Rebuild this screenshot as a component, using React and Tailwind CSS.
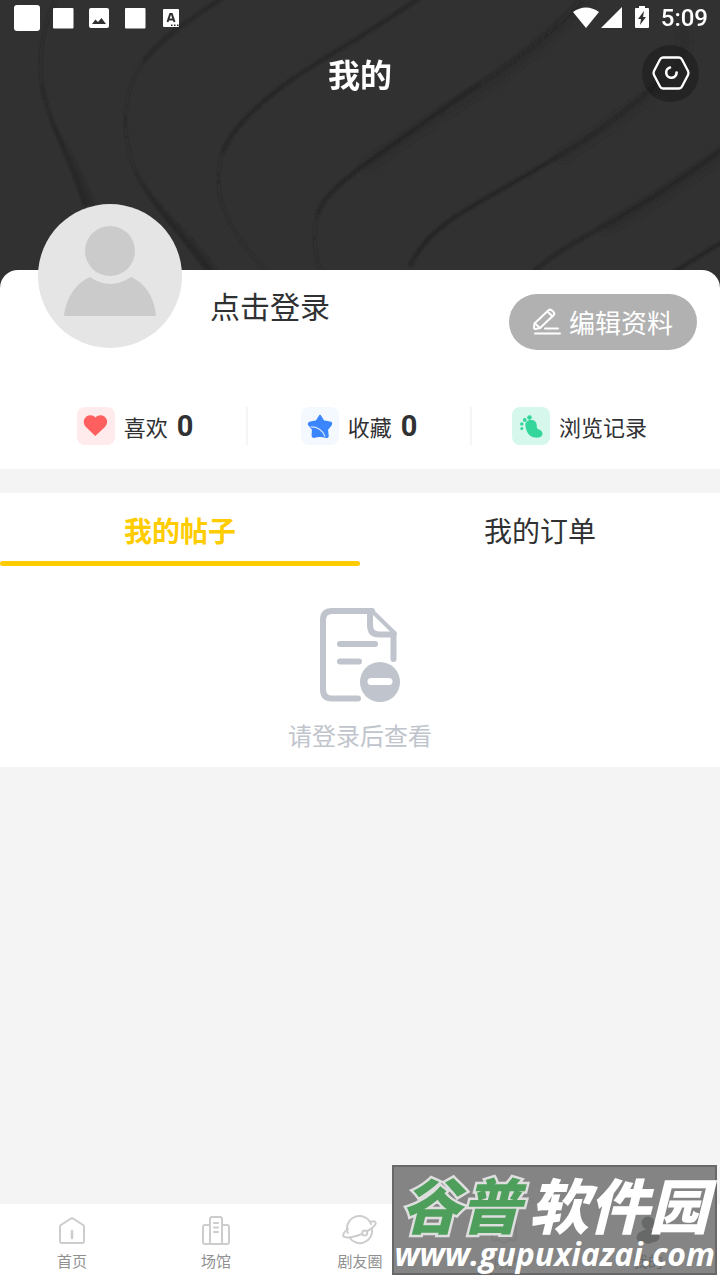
import { useState } from "react";

const navItems = [
  { key: "home", label: "首页", icon: HomeIcon },
  { key: "venue", label: "场馆", icon: VenueIcon },
  { key: "circle", label: "剧友圈", icon: PlanetIcon },
  { key: "message", label: "消息", icon: MessageIcon },
  { key: "mine", label: "我的", icon: MineIcon },
];

const tabs = [
  { key: "posts", label: "我的帖子" },
  { key: "orders", label: "我的订单" },
];

function HeaderWaves() {
  return (
    <svg
      className="absolute inset-0 h-full w-full"
      viewBox="0 0 720 288"
      preserveAspectRatio="xMidYMin slice"
      fill="none"
      aria-hidden="true"
    >
      <defs>
        <filter id="soft" x="-5%" y="-5%" width="110%" height="110%">
          <feGaussianBlur stdDeviation="0.8" />
        </filter>
        <filter id="softer" x="-5%" y="-5%" width="110%" height="110%">
          <feGaussianBlur stdDeviation="3" />
        </filter>
      </defs>
      <g stroke="#2b2b2b" strokeWidth="6" filter="url(#softer)">
        <path d="M590 0C555 34 520 62 484 88C440 114 400 142 364 168" />
        <path d="M682 25C690 50 680 66 664 82C620 119 600 132 560 158" />
        <path d="M724 152C684 182 644 207 604 230" />
      </g>
      <path d="M50 118C60 142 76 172 84 206L95 206C84 176 66 142 50 118Z" fill="#292929" filter="url(#soft)" />
      <path d="M142 182C160 215 190 245 206 272L219 272C196 240 165 215 142 182Z" fill="#292929" filter="url(#soft)" />
      <g stroke="#212121" strokeWidth="2" filter="url(#soft)">
        <path d="M56 0C38 35 36 75 48 112" opacity=".35" />
        <path d="M42 84C50 130 74 166 85 206" opacity=".6" />
        <path d="M143 62C120 96 122 138 135 170" opacity=".25" />
        <path d="M135 170C152 208 186 238 210 272" opacity=".55" />
        <path d="M222 -2C190 20 163 36 143 62" strokeWidth="3" opacity=".7" />
        <path d="M420 -2L360 37C335 52 300 72 275 92C240 120 228 138 222 154" strokeWidth="3" opacity=".75" />
        <path d="M222 154C208 200 236 240 268 272" opacity=".25" />
        <path d="M582 0C552 32 520 58 480 84" strokeWidth="3" opacity=".45" />
        <path d="M480 84C440 110 395 143 360 168C334 188 322 200 317 216" strokeWidth="3" opacity=".75" />
        <path d="M317 216C312 240 315 258 322 272" opacity=".25" />
        <path d="M660 80C625 113 595 134 560 155" strokeWidth="3" opacity=".4" />
        <path d="M560 155C520 180 488 196 455 217C432 233 420 245 410 266" strokeWidth="3" opacity=".8" />
        <path d="M722 149C682 179 640 206 600 228C575 243 552 254 534 272" strokeWidth="3" opacity=".7" />
        <path d="M722 242C706 252 690 262 674 272" strokeWidth="3" opacity=".8" />
      </g>
    </svg>
  );
}

function StatusBar() {
  return (
    <div className="relative flex h-9 items-center justify-between pl-3.5 pr-3 text-white">
      <svg className="h-7 w-[166px]" viewBox="0 0 166 28" fill="currentColor" aria-hidden="true">
        <rect x="0" y="1" width="26" height="26" rx="3" />
        <rect x="39" y="4" width="20.500" height="20.500" rx="1" />
        <path
          fillRule="evenodd"
          d="M77 4h16a2 2 0 0 1 2 2v16a2 2 0 0 1-2 2H77a2 2 0 0 1-2-2V6a2 2 0 0 1 2-2Zm1 16h14l-4.500-6-3.500 4-2.500-2.500Z"
        />
        <rect x="111" y="4" width="20.500" height="20.500" rx="1" />
        <rect x="149" y="5" width="16" height="18" rx="1" />
        <path
          d="M153.500 18l2.700-8h1.600l2.700 8M154.500 15.500h5"
          fill="none"
          stroke="#303030"
          strokeWidth="2"
        />
        <path d="M157 20.500h1.500v1.500h-1.500zM160 20.500h1.500v1.500h-1.500zM163 20.500h1.500v1.500h-1.500z" fill="#303030" />
      </svg>
      <div className="flex items-center">
        <svg className="h-6 w-[86px]" viewBox="0 0 86 24" fill="currentColor" aria-hidden="true">
          <path d="M0 6C8 0 18 0 26 6L13 22Z" />
          <path d="M28 22L49 1V22Z" />
          <path
            fillRule="evenodd"
            d="M66 0h6v2h3a1 1 0 0 1 1 1v18a1 1 0 0 1-1 1H63a1 1 0 0 1-1-1V3a1 1 0 0 1 1-1h3ZM71 5l-6 8h3l-1 6 6-8h-3Z"
          />
        </svg>
        <span className="ml-0.5 font-['Roboto',sans-serif] text-2xl font-medium">5:09</span>
      </div>
    </div>
  );
}

function SettingsIcon() {
  return (
    <svg className="h-10 w-10" viewBox="0 0 40 40" fill="none" stroke="white" strokeLinejoin="round" aria-hidden="true">
      <path d="M12 4.500H28Q30 4.500 31 6.500L37 18Q38 20 37 22L31 33.500Q30 35.500 28 35.500H12Q10 35.500 9 33.500L3 22Q2 20 3 18L9 6.500Q10 4.500 12 4.500Z" strokeWidth="2.300" />
      <path d="M19 14.500A5.200 5.200 0 1 0 25.600 19.500" strokeWidth="2.600" strokeLinecap="round" />
    </svg>
  );
}

function AvatarImage() {
  return (
    <svg className="h-full w-full" viewBox="0 0 144 144" aria-hidden="true">
      <rect width="144" height="144" fill="#e5e5e5" />
      <circle cx="72" cy="47" r="25" fill="#cbcbcb" />
      <path d="M26 112C28 94 38 79 52 73Q72 87 93 73C107 79 117 94 118 112Z" fill="#cbcbcb" />
    </svg>
  );
}

function PencilIcon() {
  return (
    <svg className="h-7 w-7" viewBox="0 0 28 28" fill="none" stroke="white" strokeWidth="2" strokeLinecap="round" strokeLinejoin="round" aria-hidden="true">
      <path d="M1.500 15.500L15.500 2.300Q17 1 18.700 2.300L20.500 4Q22 5.700 20.500 7.300L7 20L2.500 21Q1 21 1 19.500Z" />
      <path d="M14.500 3.500L19.500 8.500M2 15.500L7 20" />
      <path d="M12 20.500H25M2 25.500H27" />
    </svg>
  );
}

function HeartIcon() {
  return (
    <svg className="h-full w-full" viewBox="0 0 38 38" aria-hidden="true">
      <rect width="38" height="38" rx="8" fill="#ffebeb" />
      <path
        d="M18.500 10.500C15.500 7 9 7.500 7.200 12.500C6 16 7.500 18.500 9.500 20.500L18.200 29L27.500 20.500C29.800 18 30.800 15.500 29.700 12.500C27.800 7.500 21.500 7 18.500 10.500Z"
        fill="#ff5f5f"
      />
    </svg>
  );
}

function StarIcon() {
  return (
    <svg className="h-full w-full" viewBox="0 0 38 38" aria-hidden="true">
      <rect width="38" height="38" rx="8" fill="#f4f8ff" />
      <path
        d="M19 8.500L22.500 14L30 15.500Q31 16.500 30 18L26.300 22.500L27 29.500Q26 30.500 24.500 30L19 29L13.500 30Q12 30.500 11.300 29L11.700 22.500L8 18Q7 16.500 8.500 15.500L15.500 14Z"
        fill="#3b86ff"
        stroke="#3b86ff"
        strokeWidth="1.500"
        strokeLinejoin="round"
      />
      <path d="M9.500 20C16 19.500 22 23.500 24 29.500" fill="none" stroke="#d8e7ff" strokeWidth="1.200" />
    </svg>
  );
}

function FootIcon() {
  return (
    <svg className="h-full w-full" viewBox="0 0 38 38" fill="#34d69b" aria-hidden="true">
      <rect width="38" height="38" rx="8" fill="#d6f7eb" />
      <circle cx="17.500" cy="10.500" r="2.300" />
      <circle cx="12.800" cy="13" r="1.900" />
      <circle cx="9.800" cy="17" r="1.700" />
      <circle cx="9.800" cy="21.500" r="1.500" />
      <path d="M13.500 19C12.500 15 16 12.500 20 13C24.500 13.500 25 17.500 24.800 20C24.800 23 30 22 30.500 26.500C30.500 30.500 26 31 22.500 30.500C16.500 29.500 14 24 13.500 19Z" />
    </svg>
  );
}

function EmptyIcon() {
  return (
    <svg className="h-24 w-[82px]" viewBox="0 0 82 96" fill="none" stroke="#bfc4cd" strokeWidth="6" strokeLinecap="round" aria-hidden="true">
      <path d="M39 91.500H13Q4 91.500 4 82.500V13Q4 4 13 4H53" />
      <path d="M53 4L76 26.500" strokeWidth="4" />
      <path d="M51 5V18Q51 27.500 60 27.500H74.500V52" strokeLinejoin="round" />
      <path d="M21 37H56M21 54.500H40" />
      <circle cx="61" cy="75" r="20" fill="#bfc4cd" stroke="none" />
      <path d="M52 74.500H70" stroke="white" strokeWidth="7" />
    </svg>
  );
}

function HomeIcon() {
  return (
    <svg className="h-8 w-8" viewBox="0 0 32 32" fill="none" stroke="#cdcdcd" strokeWidth="2" strokeLinejoin="round" aria-hidden="true">
      <path d="M4 12.500Q4 11.500 5 11L15 4.500Q16 4 17 4.500L27 11Q28 11.500 28 12.500V27Q28 29 26 29H6Q4 29 4 27Z" />
      <path d="M16 17V24" strokeWidth="2.500" strokeLinecap="round" />
    </svg>
  );
}

function VenueIcon() {
  return (
    <svg className="h-8 w-8" viewBox="0 0 32 32" fill="none" stroke="#cdcdcd" strokeWidth="2" strokeLinejoin="round" aria-hidden="true">
      <path d="M10 30V5Q10 3 12 3H20Q22 3 22 5V30M10 11H5Q3 11 3 13V28Q3 30 5 30H27Q29 30 29 28V13Q29 11 27 11H22" />
      <path d="M14 9H18M14 13.500H18M14 18H18" strokeLinecap="round" />
    </svg>
  );
}

function PlanetIcon() {
  return (
    <svg className="h-8 w-9" viewBox="0 0 36 32" fill="none" stroke="#cdcdcd" strokeWidth="2" strokeLinecap="round" aria-hidden="true">
      <path d="M29 10A12.300 12.300 0 0 0 5.800 19M7.500 23.500A12.300 12.300 0 0 0 30 15" />
      <path d="M6 15C2 18 0.800 20.500 1.300 22C3 25 13 23 20 20M25.500 17C31 14 34.500 10 33.500 8.500C33 7 31 7 28 8" />
      <circle cx="22.700" cy="19" r="2.500" />
    </svg>
  );
}

function MessageIcon() {
  return (
    <svg className="h-8 w-8" viewBox="0 0 32 32" fill="none" stroke="#cdcdcd" strokeWidth="2" strokeLinejoin="round" aria-hidden="true">
      <path d="M6 5H26Q28 5 28 7V24Q28 26 26 26H20L16 29L12 26H6Q4 26 4 24V7Q4 5 6 5Z" />
    </svg>
  );
}

function MineIcon() {
  return (
    <svg className="h-8 w-8" viewBox="0 0 32 32" fill="#303133" aria-hidden="true">
      <circle cx="16" cy="9" r="6.500" />
      <path d="M10 17Q16 13 22 17Q28 19 27.500 24Q26 28 20 28.500Q16 31 12 28.500Q5 28 4.500 24Q4.500 19 10 17Z" />
    </svg>
  );
}

function Stat({ icon: Icon, label, count }) {
  return (
    <a href="#" className="flex h-[38px] items-center justify-center">
      <span className="h-[38px] w-[38px] shrink-0">
        <Icon />
      </span>
      <span className="ml-[9px] whitespace-nowrap text-[22px] leading-8">{label}</span>
      <span className="ml-[9px] font-['Roboto',sans-serif] text-[29px] font-bold leading-8">{count}</span>
    </a>
  );
}

function SiteBanner() {
  return (
    <div className="absolute bottom-[5px] right-[3px] flex flex-col items-center border-2 border-[#686868] bg-[#717171]/86 pb-1 text-white">
      <p className="flex gap-2 whitespace-nowrap text-[60px] font-black italic leading-[72px]">
        <span className="text-[#4e9f5c] [-webkit-text-stroke:5px_#dedede] [paint-order:stroke_fill]">
          谷普
        </span>
        <span>软件园</span>
      </p>
      <p className="font-['Open_Sans',sans-serif] text-[32px] font-bold italic leading-[30px]">
        www.gupuxiazai.com
      </p>
    </div>
  );
}

export default function App() {
  const [activeTab, setActiveTab] = useState("posts");

  return (
    <div className="relative flex min-h-screen flex-col bg-[#f4f4f4] font-['Noto_Sans_CJK_SC',sans-serif] text-[#303133]">
      <header className="relative overflow-hidden bg-[#313131] pb-[178px]">
        <HeaderWaves />
        <StatusBar />
        <div className="relative flex h-[74px] items-center justify-center">
          <h1 className="text-[32px] font-bold text-white">我的</h1>
          <button
            type="button"
            aria-label="设置"
            className="absolute right-[21px] flex h-[57px] w-[57px] items-center justify-center rounded-full bg-black/25"
          >
            <SettingsIcon />
          </button>
        </div>
      </header>

      <section className="relative -mt-[18px] rounded-t-[18px] bg-white pb-6">
        <div className="flex items-start pl-[38px] pr-[23px]">
          <div className="-mt-[66px] h-36 w-36 shrink-0 overflow-hidden rounded-full">
            <AvatarImage />
          </div>
          <a href="#" className="ml-7 mt-[15px] text-[30px] leading-10">
            点击登录
          </a>
          <button
            type="button"
            className="ml-auto mt-6 flex h-14 items-center gap-2 rounded-full bg-[#b1b1b1] px-6 text-[26px] leading-8 text-white"
          >
            <PencilIcon />
            编辑资料
          </button>
        </div>

        <div className="mt-[57px] grid grid-cols-3 divide-x-2 divide-[#f5f5f5] px-6">
          <Stat icon={HeartIcon} label="喜欢" count="0" />
          <Stat icon={StarIcon} label="收藏" count="0" />
          <Stat icon={FootIcon} label="浏览记录" />
        </div>
      </section>

      <section className="mt-6 bg-white">
        <div role="tablist" className="grid grid-cols-2">
          {tabs.map((tab) => (
            <button
              key={tab.key}
              type="button"
              role="tab"
              aria-selected={activeTab === tab.key}
              onClick={() => setActiveTab(tab.key)}
              className={
                activeTab === tab.key
                  ? "relative h-[73px] text-[28px] font-bold text-[#ffcc00]"
                  : "relative h-[73px] text-[28px]"
              }
            >
              {tab.label}
              {activeTab === tab.key && (
                <span className="absolute inset-x-0 bottom-0 h-[5px] rounded-full bg-[#ffcc00]" />
              )}
            </button>
          ))}
        </div>
        <div className="flex flex-col items-center pb-3 pt-[41px]">
          <EmptyIcon />
          <p className="mt-3 text-2xl leading-10 text-[#c0c4cc]">请登录后查看</p>
        </div>
      </section>

      <nav className="mt-auto grid grid-cols-5 bg-white pb-1.5 pt-2.5">
        {navItems.map(({ key, label, icon: Icon }) => (
          <a
            key={key}
            href="#"
            className={
              key === "mine"
                ? "flex flex-col items-center gap-0.5 text-[15px] leading-[26px] text-[#303133]"
                : "flex flex-col items-center gap-0.5 text-[15px] leading-[26px] text-[#909090]"
            }
          >
            <Icon />
            {label}
          </a>
        ))}
      </nav>

      <SiteBanner />
    </div>
  );
}
